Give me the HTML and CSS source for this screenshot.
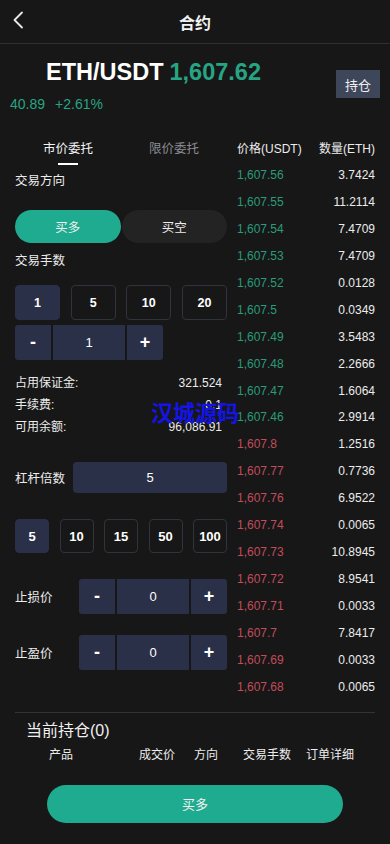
FILE: index.html
```html
<!DOCTYPE html>
<html lang="zh-CN">
<head>
<meta charset="utf-8">
<meta name="viewport" content="width=device-width, initial-scale=1">
<title>合约</title>
<link rel="stylesheet" href="styles.css">
</head>
<body>
<div class="page">
  <header class="topbar">
    <span class="back">
      <svg width="12" height="18" viewBox="0 0 12 18"><path d="M10 1.5 L2.5 9 L10 16.5" fill="none" stroke="#e8e8e8" stroke-width="1.8" stroke-linecap="round" stroke-linejoin="round"/></svg>
    </span>
    <h1 class="title">合约</h1>
  </header>

  <section class="ticker">
    <div class="ticker-left">
      <div class="pair-line"><span class="pair">ETH/USDT</span><span class="last">1,607.62</span></div>
      <div class="change"><span>40.89</span><span class="pct">+2.61%</span></div>
    </div>
    <button class="hold-btn">持仓</button>
  </section>

  <main class="main">
    <div class="left">
      <div class="tabs">
        <div class="tab active">市价委托</div>
        <div class="tab">限价委托</div>
      </div>
      <div class="label first">交易方向</div>
      <div class="toggle">
        <div class="tg buy">买多</div>
        <div class="tg sell">买空</div>
      </div>
      <div class="label">交易手数</div>
      <div class="qty-row">
        <div class="chip on">1</div>
        <div class="chip">5</div>
        <div class="chip">10</div>
        <div class="chip">20</div>
      </div>
      <div class="stepper small">
        <div class="sb">-</div>
        <div class="sv">1</div>
        <div class="sb">+</div>
      </div>
      <div class="info">
        <div class="irow"><span>占用保证金:</span><span>321.524</span></div>
        <div class="irow"><span>手续费:</span><span>0.1</span></div>
        <div class="irow"><span>可用余额:</span><span>96,086.91</span></div>
      </div>
      <div class="lev-row">
        <span class="lev-label">杠杆倍数</span>
        <div class="lev-input">5</div>
      </div>
      <div class="lev-chips">
        <div class="lchip on">5</div>
        <div class="lchip">10</div>
        <div class="lchip">15</div>
        <div class="lchip">50</div>
        <div class="lchip">100</div>
      </div>
      <div class="price-row sl">
        <span class="plabel">止损价</span>
        <div class="stepper">
          <div class="sb">-</div>
          <div class="sv">0</div>
          <div class="sb">+</div>
        </div>
      </div>
      <div class="price-row tp">
        <span class="plabel">止盈价</span>
        <div class="stepper">
          <div class="sb">-</div>
          <div class="sv">0</div>
          <div class="sb">+</div>
        </div>
      </div>
    </div>

    <div class="book">
      <div class="bhead"><span>价格(USDT)</span><span>数量(ETH)</span></div>
      <div class="brow up"><span>1,607.56</span><span>3.7424</span></div>
      <div class="brow up"><span>1,607.55</span><span>11.2114</span></div>
      <div class="brow up"><span>1,607.54</span><span>7.4709</span></div>
      <div class="brow up"><span>1,607.53</span><span>7.4709</span></div>
      <div class="brow up"><span>1,607.52</span><span>0.0128</span></div>
      <div class="brow up"><span>1,607.5</span><span>0.0349</span></div>
      <div class="brow up"><span>1,607.49</span><span>3.5483</span></div>
      <div class="brow up"><span>1,607.48</span><span>2.2666</span></div>
      <div class="brow up"><span>1,607.47</span><span>1.6064</span></div>
      <div class="brow up"><span>1,607.46</span><span>2.9914</span></div>
      <div class="brow down"><span>1,607.8</span><span>1.2516</span></div>
      <div class="brow down"><span>1,607.77</span><span>0.7736</span></div>
      <div class="brow down"><span>1,607.76</span><span>6.9522</span></div>
      <div class="brow down"><span>1,607.74</span><span>0.0065</span></div>
      <div class="brow down"><span>1,607.73</span><span>10.8945</span></div>
      <div class="brow down"><span>1,607.72</span><span>8.9541</span></div>
      <div class="brow down"><span>1,607.71</span><span>0.0033</span></div>
      <div class="brow down"><span>1,607.7</span><span>7.8417</span></div>
      <div class="brow down"><span>1,607.69</span><span>0.0033</span></div>
      <div class="brow down"><span>1,607.68</span><span>0.0065</span></div>
    </div>
  </main>

  <section class="positions">
    <div class="pos-title">当前持仓(0)</div>
    <div class="pos-head">
      <span>产品</span><span>成交价</span><span>方向</span><span>交易手数</span><span>订单详细</span>
    </div>
  </section>

  <div class="cta-wrap">
    <button class="cta">买多</button>
  </div>

  <div class="watermark">汉城源码</div>
</div>
</body>
</html>
```

FILE: styles.css
```css
* { box-sizing: border-box; margin: 0; padding: 0; }
html, body { background: #171717; }
body {
  font-family: "Liberation Sans", Arial, "Noto Sans CJK SC", sans-serif;
  color: #ececec;
  font-size: 12px;
}
.page { position: relative; width: 390px; min-height: 844px; background: #171717; }

.topbar {
  height: 44px;
  border-bottom: 1px solid #2f2f2f;
  display: flex;
  align-items: center;
  justify-content: center;
  position: relative;
}
.back { position: absolute; left: 12px; top: 11px; display: flex; }
.title { font-size: 16px; font-weight: bold; color: #f2f2f2; }

.ticker {
  display: flex;
  justify-content: space-between;
  align-items: flex-start;
  padding: 14px 10px 0 10px;
  height: 92px;
}
.pair-line { margin-left: 36px; height: 28px; display: flex; align-items: center; gap: 6px; }
.pair { font-size: 23.5px; font-weight: bold; color: #ffffff; }
.last { font-size: 23.5px; font-weight: bold; color: #27a484; }
.change { margin-top: 10px; font-size: 14px; color: #27a484; line-height: 16px; display: flex; gap: 10px; }
.hold-btn {
  margin-top: 12px;
  width: 44px;
  height: 28px;
  background: #3e4659;
  border: none;
  color: #eef0f4;
  font-size: 13px;
  font-family: "Noto Sans CJK SC", sans-serif;
}

.main { display: flex; }
.left { width: 227px; padding-left: 15px; }
.tabs { display: flex; height: 29px; }
.tab {
  flex: 1;
  text-align: center;
  font-size: 12.5px;
  line-height: 27px;
  color: #8a8c93;
  position: relative;
}
.tab.active { color: #f4f4f4; }
.tab.active::after {
  content: "";
  position: absolute;
  left: 50%;
  top: 27px;
  width: 20px;
  height: 2px;
  margin-left: -10px;
  background: #ffffff;
}
.label { font-size: 12.5px; line-height: 18px; color: #ececec; margin-top: 8px; }
.label.first { margin-top: 7px; }
.toggle { display: flex; margin-top: 20px; height: 33px; margin-bottom: 9px; }
.tg {
  flex: 1;
  display: flex;
  align-items: center;
  justify-content: center;
  border-radius: 17px;
  font-size: 12.5px;
}
.tg.buy { background: #1fab8f; color: #f2f2f2; }
.tg.sell { background: #232323; color: #ececec; margin-left: 1px; }

.qty-row { display: flex; justify-content: space-between; margin-top: 15px; }
.chip {
  width: 45px;
  height: 35px;
  border: 1px solid #30333b;
  border-radius: 4px;
  display: flex;
  align-items: center;
  justify-content: center;
  font-weight: bold;
  font-size: 12.5px;
  color: #ffffff;
}
.chip.on { background: #2a3047; border-color: #2a3047; }

.stepper { display: flex; gap: 2px; height: 35px; }
.stepper.small { margin-top: 5px; }
.sb, .sv {
  background: #2a3047;
  display: flex;
  align-items: center;
  justify-content: center;
  color: #ffffff;
}
.sb { width: 36px; font-size: 18px; font-weight: bold; }
.sv { width: 72px; font-size: 13px; }
.stepper .sb:first-child { border-radius: 3px 0 0 3px; }
.stepper .sb:last-child { border-radius: 0 3px 3px 0; }

.info { margin-top: 12px; width: 207px; }
.irow { display: flex; justify-content: space-between; line-height: 22px; font-size: 12px; color: #ececec; }

.lev-row { display: flex; align-items: center; margin-top: 24px; }
.lev-label { width: 58px; font-size: 12.5px; }
.lev-input {
  width: 154px;
  height: 31px;
  background: #2a3047;
  border-radius: 4px;
  display: flex;
  align-items: center;
  justify-content: center;
  font-size: 13px;
  color: #ffffff;
}
.lev-chips { display: flex; justify-content: space-between; margin-top: 26px; width: 212px; }
.lchip {
  width: 34px;
  height: 34px;
  border: 1px solid #30333b;
  border-radius: 4px;
  display: flex;
  align-items: center;
  justify-content: center;
  font-weight: bold;
  font-size: 13px;
  color: #ffffff;
}
.lchip.on { background: #2a3047; border-color: #2a3047; }

.price-row { display: flex; align-items: center; }
.price-row.sl { margin-top: 26px; }
.price-row.tp { margin-top: 21px; }
.plabel { width: 64px; font-size: 12.5px; }

.book { flex: 1; padding: 0 15px 0 10px; }
.bhead {
  display: flex;
  justify-content: space-between;
  height: 26px;
  line-height: 26px;
  font-size: 12px;
  color: #ececec;
}
.brow {
  display: flex;
  justify-content: space-between;
  height: 26.95px;
  line-height: 27px;
  font-size: 12px;
}
.brow span:last-child { color: #ececec; }
.brow.up span:first-child { color: #2a9b7b; }
.brow.down span:first-child { color: #c24c5c; }

.positions { margin: 11px 15px 0 15px; border-top: 1px solid #333333; }
.pos-title { font-size: 16px; line-height: 22px; margin-top: 7px; padding-left: 11px; color: #f0f0f0; }
.pos-head {
  display: grid;
  grid-template-columns: 90px 55px 49px 63px auto;
  padding-left: 34px;
  margin-top: 4px;
  line-height: 18px;
  font-size: 12px;
  color: #ececec;
}
.cta-wrap { display: flex; justify-content: center; margin-top: 21px; }
.cta {
  width: 296px;
  height: 38px;
  border-radius: 19px;
  border: none;
  background: #1fab8f;
  color: #f2f2f2;
  font-size: 13px;
  font-family: "Noto Sans CJK SC", sans-serif;
}

.watermark {
  position: absolute;
  left: 151px;
  top: 397px;
  font-family: "Noto Sans CJK SC", sans-serif;
  font-weight: bold;
  font-size: 22px;
  line-height: 28px;
  color: #1414e6;
}
```
